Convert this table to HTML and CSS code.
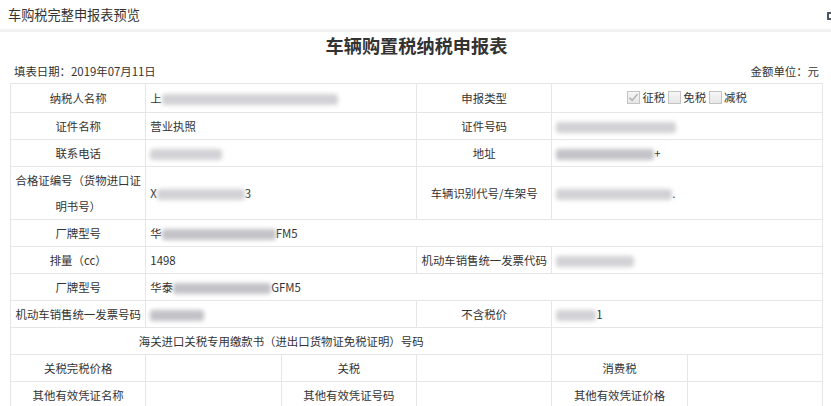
FILE: index.html
```html
<!DOCTYPE html>
<html lang="zh-CN">
<head>
<meta charset="utf-8">
<title>车购税完整申报表预览</title>
<link rel="stylesheet" href="styles.css">
</head>
<body>
<header class="topbar">
  <span class="topbar-title">车购税完整申报表预览</span>
  <span class="topbar-icon"></span>
</header>
<main class="content">
  <h1 class="doc-title">车辆购置税纳税申报表</h1>
  <div class="meta">
    <span>填表日期<span class="colon">：</span>2019年07月11日</span>
    <span>金额单位<span class="colon">：</span>元</span>
  </div>
  <table class="form">
    <colgroup>
      <col><col><col><col><col><col>
    </colgroup>
    <tr>
      <td class="label">纳税人名称</td>
      <td class="value" colspan="2"><span class="peek">上</span><span class="blur" style="width:176px"></span></td>
      <td class="label">申报类型</td>
      <td class="value center" colspan="2">
        <span class="checks">
          <span class="check"><span class="box checked"><svg viewBox="0 0 13 13" width="13" height="13"><path d="M2.5 6.8 L5.2 9.4 L10.5 3.2" fill="none" stroke="#a8a8a8" stroke-width="1.3"/></svg></span>征税</span>
          <span class="check"><span class="box"></span>免税</span>
          <span class="check"><span class="box"></span>减税</span>
        </span>
      </td>
    </tr>
    <tr>
      <td class="label">证件名称</td>
      <td class="value" colspan="2">营业执照</td>
      <td class="label">证件号码</td>
      <td class="value" colspan="2"><span class="blur" style="width:120px"></span></td>
    </tr>
    <tr>
      <td class="label">联系电话</td>
      <td class="value" colspan="2"><span class="blur" style="width:72px"></span></td>
      <td class="label">地址</td>
      <td class="value" colspan="2"><span class="blur dark" style="width:98px"></span><span class="peek">+</span></td>
    </tr>
    <tr>
      <td class="label">合格证编号（货物进口证明书号）</td>
      <td class="value" colspan="2"><span class="peek">X</span><span class="blur" style="width:88px"></span><span class="peek">3</span></td>
      <td class="label">车辆识别代号/车架号</td>
      <td class="value" colspan="2"><span class="blur" style="width:116px"></span><span class="peek">.</span></td>
    </tr>
    <tr>
      <td class="label">厂牌型号</td>
      <td class="value" colspan="5"><span class="peek">华</span><span class="blur dark" style="width:114px"></span><span class="peek">FM5</span></td>
    </tr>
    <tr>
      <td class="label">排量（cc）</td>
      <td class="value" colspan="2">1498</td>
      <td class="label">机动车销售统一发票代码</td>
      <td class="value" colspan="2"><span class="blur" style="width:78px"></span></td>
    </tr>
    <tr>
      <td class="label">厂牌型号</td>
      <td class="value" colspan="5"><span class="peek">华泰</span><span class="blur dark" style="width:98px"></span><span class="peek">GFM5</span></td>
    </tr>
    <tr>
      <td class="label">机动车销售统一发票号码</td>
      <td class="value" colspan="2"><span class="blur dark" style="width:54px"></span></td>
      <td class="label">不含税价</td>
      <td class="value" colspan="2"><span class="blur" style="width:40px"></span><span class="peek">1</span></td>
    </tr>
    <tr>
      <td class="label" colspan="4">海关进口关税专用缴款书（进出口货物证免税证明）号码</td>
      <td class="value" colspan="2"></td>
    </tr>
    <tr>
      <td class="label">关税完税价格</td>
      <td class="value"></td>
      <td class="label">关税</td>
      <td class="value"></td>
      <td class="label">消费税</td>
      <td class="value"></td>
    </tr>
    <tr>
      <td class="label">其他有效凭证名称</td>
      <td class="value"></td>
      <td class="label">其他有效凭证号码</td>
      <td class="value"></td>
      <td class="label">其他有效凭证价格</td>
      <td class="value"></td>
    </tr>
  </table>
</main>
</body>
</html>
```

FILE: styles.css
```css
html, body {
  margin: 0;
  padding: 0;
  overflow: hidden;
  background: #fff;
}
body {
  font-family: "Noto Sans CJK SC", "Microsoft YaHei", sans-serif;
  color: #333;
}
.topbar {
  display: flex;
  align-items: center;
  justify-content: space-between;
  height: 29px;
  padding-left: 8px;
  border-bottom: 3px solid #f2f2f2;
}
.topbar-title {
  font-size: 13.2px;
  color: #333;
  line-height: 29px;
}
.topbar-icon {
  width: 6px;
  height: 4px;
  border: 2px solid #4a5566;
  margin-right: -6px;
  margin-top: 2px;
  flex: none;
}
.content {
  padding: 0 8px 0 10px;
}
.doc-title {
  margin: 0;
  font-size: 18.2px;
  font-weight: bold;
  line-height: 27px;
  text-align: center;
  color: #333;
}
.meta {
  display: flex;
  justify-content: space-between;
  padding: 0 4px;
  font-size: 11.4px;
  line-height: 24px;
  color: #333;
}
.colon {
  font-family: "Noto Sans CJK TC", sans-serif;
}
.form {
  width: 100%;
  table-layout: fixed;
  border-collapse: collapse;
  font-size: 11.4px;
}
.form td {
  border: 1px solid #e6e6e6;
  line-height: 26px;
  padding: 0 4px;
  vertical-align: middle;
  white-space: normal;
}
.form td.label {
  text-align: center;
}
.form td.value {
  text-align: left;
}
.form td.center {
  text-align: center;
}
.peek {
  color: #333;
}
.blur {
  display: inline-block;
  height: 11px;
  vertical-align: middle;
  background: #d2d2d6;
  filter: blur(2px);
  border-radius: 3px;
}
.blur.dark {
  background: #c2c2c8;
}
.checks {
  display: inline-flex;
  align-items: center;
  gap: 3px;
}
.check {
  display: inline-flex;
  align-items: center;
  gap: 2px;
}
.box {
  display: inline-block;
  width: 13px;
  height: 13px;
  box-sizing: border-box;
  border: 1px solid #c4c4c4;
  background: linear-gradient(#f6f6f6, #e6e6e6);
  position: relative;
}
.box svg {
  position: absolute;
  left: -1px;
  top: -1px;
}
```
